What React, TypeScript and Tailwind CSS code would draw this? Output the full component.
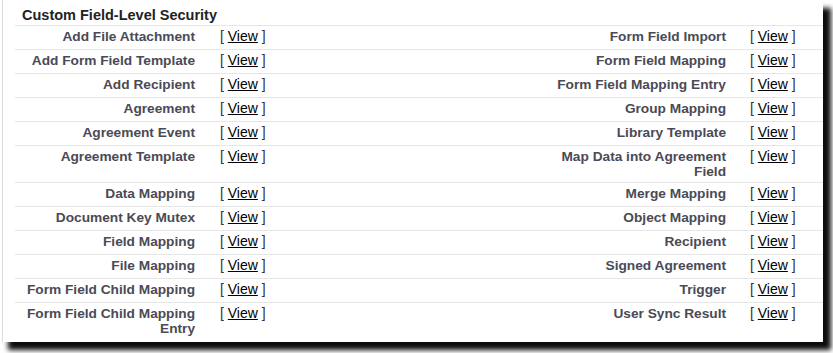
import React from 'react'

const rows: [string, string][] = [
  ['Add File Attachment', 'Form Field Import'],
  ['Add Form Field Template', 'Form Field Mapping'],
  ['Add Recipient', 'Form Field Mapping Entry'],
  ['Agreement', 'Group Mapping'],
  ['Agreement Event', 'Library Template'],
  ['Agreement Template', 'Map Data into Agreement Field'],
  ['Data Mapping', 'Merge Mapping'],
  ['Document Key Mutex', 'Object Mapping'],
  ['Field Mapping', 'Recipient'],
  ['File Mapping', 'Signed Agreement'],
  ['Form Field Child Mapping', 'Trigger'],
  ['Form Field Child Mapping Entry', 'User Sync Result'],
]

function ViewLink() {
  return (
    <span className="text-[#333]">
      [ <a href="#" className="text-black underline">View</a> ]
    </span>
  )
}

export default function App() {
  return (
    <div className="min-h-screen bg-white font-['Liberation_Sans',Arial,sans-serif]">
      <div className="w-[823px] h-[342px] bg-white shadow-[8px_8px_5px_rgba(0,0,0,0.95)] pl-[2px]">
        <div className="h-full border-l border-[#dadada]">
          {/* section header */}
          <div className="ml-[12px] h-[26px] border-b border-[#e6e6e6] pl-[7px] pt-[7px] text-[14.5px] leading-[17px] font-bold text-[#222]">
            Custom Field-Level Security
          </div>

          {rows.map(([left, right], i) => (
            <div
              key={left}
              className={`ml-[12px] flex items-start text-[14px] leading-[15px] ${
                i < rows.length - 1 ? 'border-b border-[#e6e6e6]' : ''
              }`}
            >
              <div className="w-[180px] shrink-0 pl-[4px] pt-[3px] pb-[3px] text-right text-[13.7px] font-bold text-[#4a4a56]">
                {left}
              </div>
              <div className="w-[355px] shrink-0 pl-[25px] pt-[3px] pb-[5px]">
                <ViewLink />
              </div>
              <div className="w-[176px] shrink-0 pt-[3px] pb-[3px] text-right text-[13.7px] font-bold text-[#4a4a56]">
                {right}
              </div>
              <div className="flex-1 pl-[24px] pt-[3px] pb-[5px]">
                <ViewLink />
              </div>
            </div>
          ))}
        </div>
      </div>
    </div>
  )
}
